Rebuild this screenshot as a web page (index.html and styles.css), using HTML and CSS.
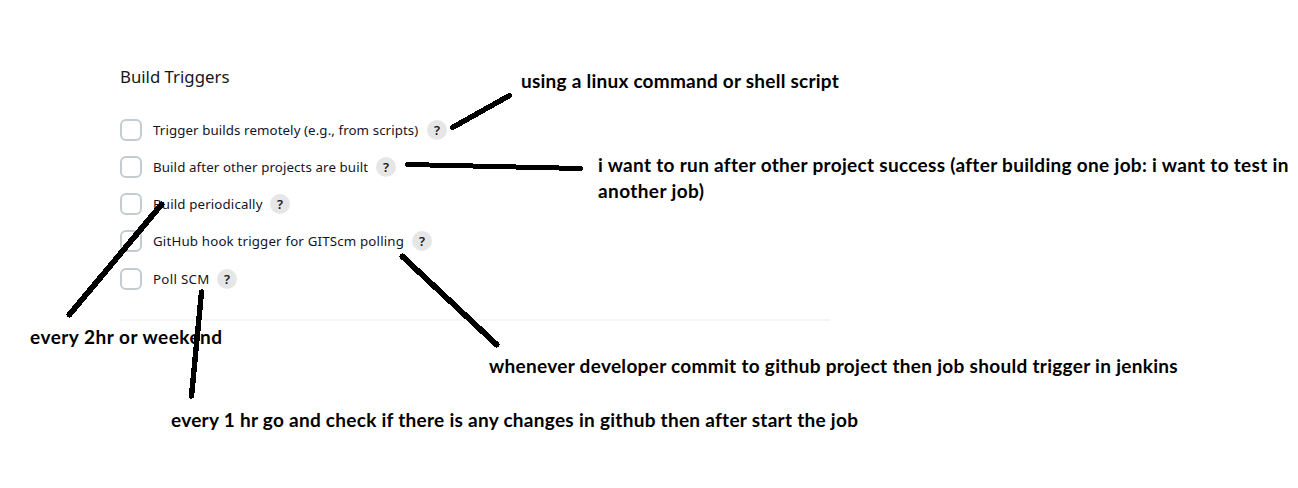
FILE: index.html
```html
<!DOCTYPE html>
<html lang="en">
<head>
<meta charset="utf-8">
<title>Build Triggers</title>
<link rel="stylesheet" href="styles.css">
</head>
<body>
<main class="page">
  <section class="triggers">
    <h1 class="title">Build Triggers</h1>
    <div class="options">
      <div class="option"><span class="box"></span><span class="label l1">Trigger builds remotely (e.g., from scripts)</span><span class="help">?</span></div>
      <div class="option"><span class="box"></span><span class="label l2">Build after other projects are built</span><span class="help">?</span></div>
      <div class="option"><span class="box"></span><span class="label l3">Build periodically</span><span class="help">?</span></div>
      <div class="option"><span class="box"></span><span class="label l4">GitHub hook trigger for GITScm polling</span><span class="help">?</span></div>
      <div class="option"><span class="box"></span><span class="label l5">Poll SCM</span><span class="help">?</span></div>
    </div>
  </section>
  <p class="note n1">using a linux command or shell script</p>
  <p class="note n2">i want to run after other project success (after building one job: i want to test in<br><span class="n2b">another job)</span></p>
  <p class="note n3">every 2hr or weekend</p>
  <p class="note n4">whenever developer commit to github project then job should trigger in jenkins</p>
  <p class="note n5">every 1 hr go and check if there is any changes in github then after start the job</p>
  <svg class="strokes" width="1298" height="488" viewBox="0 0 1298 488">
    <path d="M452.5 127.500L509.5 95.5"/>
    <path class="level" d="M407.5 164.500L580.5 168.500"/>
    <path class="steep" d="M161.500 204.500L69.500 314.500M402.500 256.500L496.500 344.500"/>
    <path d="M201.500 292L191.500 396"/>
  </svg>
</main>
</body>
</html>
```
FILE: styles.css
```css
body { margin: 0; background: #fff; }
.page { position: relative; width: 1298px; height: 488px; overflow: hidden; }
.triggers {
  box-sizing: border-box;
  width: 710px;
  height: 321px;
  margin-left: 120px;
  padding-top: 64px;
  border-bottom: 2px solid #f3f3f8;
  font-family: "Noto Sans", sans-serif;
  color: #14141f;
}
.title { margin: 0; font-size: 16.8px; font-weight: 400; line-height: 26px; }
.options { display: flex; flex-direction: column; gap: 15px; margin-top: 29px; }
.option { display: flex; align-items: center; height: 22px; }
.option:last-child { margin-top: 1px; }
.box { box-sizing: border-box; width: 22px; height: 22px; margin-right: 11px; border: 2px solid #c3ccd1; border-radius: 6px; }
.label { margin-right: 9px; font-size: 13.3px; line-height: 22px; white-space: nowrap; }
.l1 { width: 265px; letter-spacing: 0.09px; }
.l2 { width: 214px; letter-spacing: 0.11px; }
.l3 { width: 108px; letter-spacing: 0.14px; }
.l4 { width: 250px; letter-spacing: 0.17px; }
.l5 { width: 55px; letter-spacing: 0.3px; }
.help { width: 20px; height: 20px; border-radius: 50%; background: #e6e6e6; font-size: 13px; font-weight: 600; line-height: 20px; text-align: center; }
.note {
  position: absolute;
  margin: 0;
  color: #000;
  font: 700 19px/26px Lato, sans-serif;
  white-space: nowrap;
}
.n1 { left: 521px; top: 68px; letter-spacing: 0.24px; }
.n2 { left: 598px; top: 152px; letter-spacing: 0.31px; }
.n2b { letter-spacing: 0.4px; }
.n3 { left: 30px; top: 324px; letter-spacing: 0.5px; }
.n4 { left: 489px; top: 353px; letter-spacing: 0.3px; }
.n5 { left: 171px; top: 407px; letter-spacing: 0.28px; }
.strokes { position: absolute; left: 0; top: 0; }
.strokes path { fill: none; stroke: #000; stroke-width: 5.4; stroke-linecap: round; shape-rendering: crispEdges; }
.strokes .level { stroke-width: 5; }
.strokes .steep { stroke-width: 5.8; }
```
